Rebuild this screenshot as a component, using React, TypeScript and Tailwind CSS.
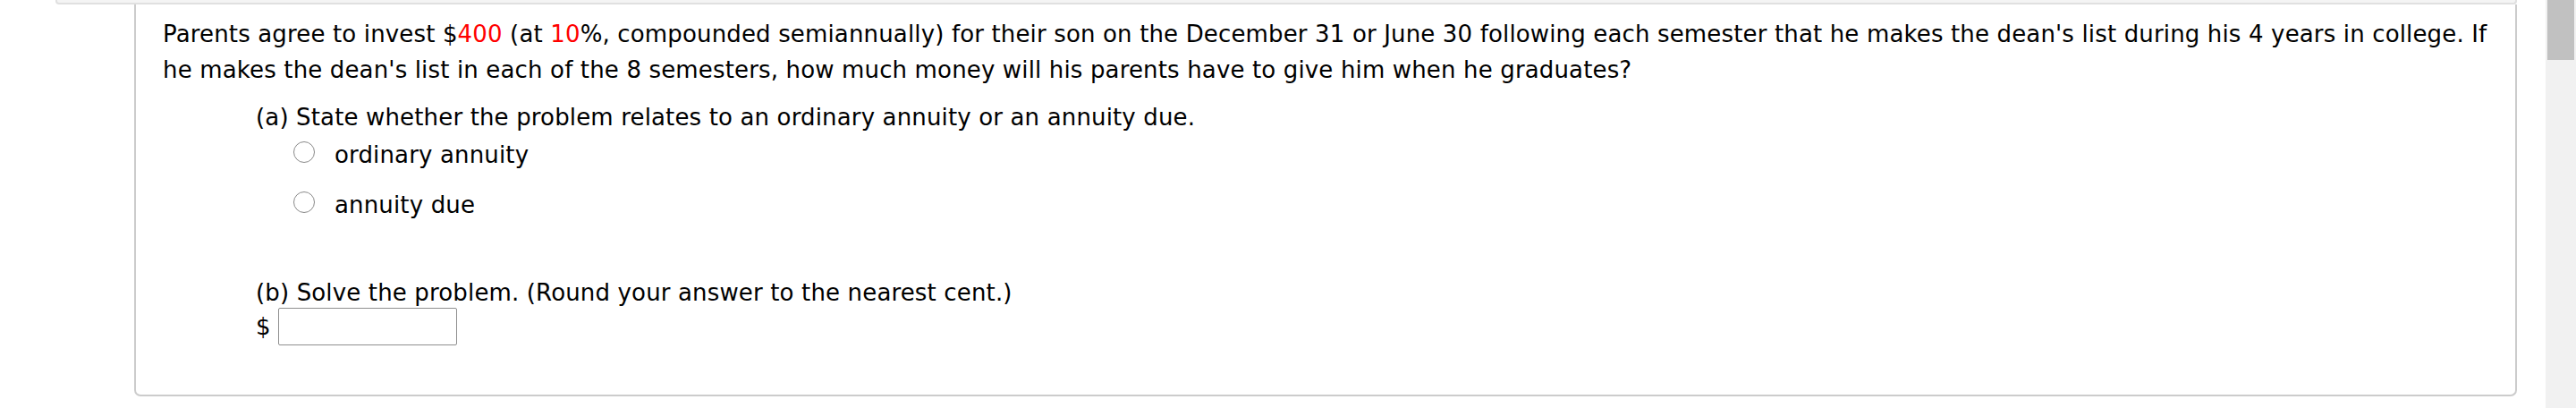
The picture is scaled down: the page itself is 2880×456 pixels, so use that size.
import React from "react";

function Radio({ label }: { label: string }) {
  return (
    <div className="flex items-start h-[56px]">
      <span className="mt-[5px] ml-[42px] w-[24px] h-[24px] rounded-full border border-[#8a8a8a] bg-white shrink-0" />
      <span className="ml-[22px] leading-[40px]">{label}</span>
    </div>
  );
}

export default function App() {
  return (
    <div
      className="flex w-[2880px] h-[456px] bg-white text-black overflow-hidden"
      style={{ fontFamily: '"DejaVu Sans", Verdana, sans-serif' }}
    >
      <div className="w-[2846px] pl-[62px] flex flex-col">
        <div className="w-[2752px] h-[5px] bg-[#f4f4f4] border-x-2 border-b-2 border-[#e0e0e0] rounded-b-[4px]" />
        <div className="ml-[88px] w-[2664px] h-[438px] border-2 border-t-0 border-[#cccccc] rounded-b-[7px] pl-[30px] pr-[28px] pt-[13px] text-[26px] tracking-[0.15px]">
          <p className="leading-[40px]">
            Parents agree to invest $<span className="text-[#ff0000]">400</span> (at{" "}
            <span className="text-[#ff0000]">10</span>%, compounded semiannually) for their son on the
            December 31 or June 30 following each semester that he makes the dean's list during his 4
            years in college. If he makes the dean's list in each of the 8 semesters, how much money will
            his parents have to give him when he graduates?
          </p>
          <div className="ml-[104px] mt-[13px]">
            <div className="leading-[40px] h-[42px]">
              (a) State whether the problem relates to an ordinary annuity or an annuity due.
            </div>
            <Radio label="ordinary annuity" />
            <Radio label="annuity due" />
            <div className="leading-[40px] mt-[42px]">
              (b) Solve the problem. (Round your answer to the nearest cent.)
            </div>
            <div className="flex items-center mt-[-3px]">
              <span className="leading-[40px] w-[25px]">$</span>
              <input
                type="text"
                className="w-[200px] h-[42px] border border-[#8f8f8f] rounded-[2px] bg-white outline-none"
              />
            </div>
          </div>
        </div>
      </div>
      <div className="w-[34px] h-[456px] bg-[#f1f1f1] pl-[2px]">
        <div className="w-[30px] h-[67px] bg-[#c1c1c1]" />
      </div>
    </div>
  );
}
